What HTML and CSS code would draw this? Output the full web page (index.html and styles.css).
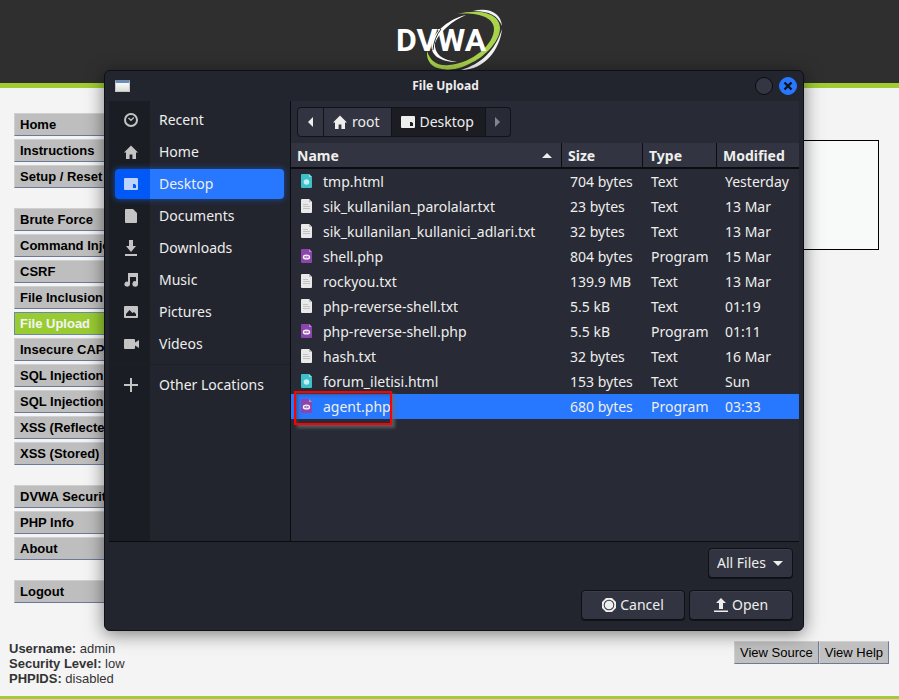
FILE: index.html
```html
<!DOCTYPE html>
<html lang="en">
<head>
<meta charset="utf-8">
<title>File Upload</title>
<link rel="stylesheet" href="styles.css">
</head>
<body>
<svg class="defs" aria-hidden="true">
  <symbol id="i-home" viewBox="0 0 14 14"><path d="M7 0.5 0 7.5h2V14h3.6V9.500h2.800V14H12V7.500h2z"/></symbol>
  <symbol id="i-desktop" viewBox="0 0 14 14"><path fill-rule="evenodd" d="M1 1h12q1 0 1 1v10q0 1-1 1H1q-1 0-1-1V2q0-1 1-1zM9 7v4h3V8.200L10.800 7z"/></symbol>
  <symbol id="i-txt" viewBox="0 0 11 14"><path fill="#e9e9e9" d="M1 0h7l3 3v10q0 1-1 1H1q-1 0-1-1V1q0-1 1-1z"/><path fill="#c3c3c3" d="M2 5h5v1H2zM2 7h7v1H2zM2 9h7v1H2z"/><path fill="#bbb" d="M8 0l3 3H8z"/></symbol>
  <symbol id="i-html" viewBox="0 0 11 14"><path fill="#3fbfc7" d="M1 0h7l3 3v10q0 1-1 1H1q-1 0-1-1V1q0-1 1-1z"/><path fill="#8ee0e4" d="M8 0l3 3H8z"/><circle cx="5.500" cy="8" r="2.800" fill="#bdf0f2"/></symbol>
  <symbol id="i-php" viewBox="0 0 11 14"><path fill="#8e44ad" d="M1 0h7l3 3v10q0 1-1 1H1q-1 0-1-1V1q0-1 1-1z"/><path fill="#bd8ad2" d="M8 0l3 3H8z"/><ellipse cx="5.500" cy="8" rx="3" ry="1.900" fill="none" stroke="#fff" stroke-width="1.400"/><path fill="#fff" d="M4.500 7.500h2v1h-2z"/></symbol>
</svg>

<header class="banner">
  <svg class="logo" width="106" height="62" viewBox="0 0 106 62" role="img" aria-label="DVWA">
    <path fill="#f4f4f4" d="M76 2C92-2 104 4 105 17 101 7 93 2 76 2z"/>
    <path fill="#f4f4f4" d="M105 20C103 40 88 61 64 61 84 55 98 42 105 20z"/>
    <path fill="#a9d34b" d="M60 5C84-1 103 5 103 19 103 34 84 50 74 54 60 62 48 61 45 60 35 59 29 52 30 42 34 54 42 57 52 56 76 54 97 35 97 20 97 8 80 3 60 5z"/>
    <path fill="#fff" d="M69 6C52 10 38 22 35 33 32 46 43 53 60 53 45 51 37 45 38 34 42 23 55 12 69 6z"/>
    <text class="logo-text" x="-1" y="42">DVWA</text>
    <path fill="none" stroke="#2f2f2f" d="M44 20Q37 29 36 41"/>
  </svg>
</header>

<div class="page">
  <nav class="menu">
    <ul>
      <li><a href="#">Home</a></li>
      <li><a href="#">Instructions</a></li>
      <li><a href="#">Setup / Reset DB</a></li>
    </ul>
    <ul>
      <li><a href="#">Brute Force</a></li>
      <li><a href="#">Command Injection</a></li>
      <li><a href="#">CSRF</a></li>
      <li><a href="#">File Inclusion</a></li>
      <li><a href="#" class="current">File Upload</a></li>
      <li><a href="#">Insecure CAPTCHA</a></li>
      <li><a href="#">SQL Injection</a></li>
      <li><a href="#">SQL Injection (Blind)</a></li>
      <li><a href="#">XSS (Reflected)</a></li>
      <li><a href="#">XSS (Stored)</a></li>
    </ul>
    <ul>
      <li><a href="#">DVWA Security</a></li>
      <li><a href="#">PHP Info</a></li>
      <li><a href="#">About</a></li>
    </ul>
    <ul>
      <li><a href="#">Logout</a></li>
    </ul>
  </nav>
  <main class="vulnerable"></main>
</div>

<div class="system">
  <div class="status"><b>Username:</b> admin<br><b>Security Level:</b> low<br><b>PHPIDS:</b> disabled</div>
  <div class="help"><button type="button">View Source</button><button type="button">View Help</button></div>
</div>

<section class="dialog" role="dialog" aria-labelledby="dialog-title">
  <div class="titlebar">
    <span class="window-icon"></span>
    <h1 id="dialog-title">File Upload</h1>
    <div class="controls">
      <button type="button" class="round" aria-label="Maximize"></button>
      <button type="button" class="round close" aria-label="Close"><svg width="10" height="10" viewBox="0 0 10 10"><path d="M1.500 1.500l7 7M8.500 1.500l-7 7" stroke="#10131b" stroke-width="2.400"/></svg></button>
    </div>
  </div>

  <div class="body">
    <nav class="places">
      <a href="#"><svg viewBox="0 0 14 14"><circle cx="7" cy="7" r="6" fill="none" stroke="currentColor" stroke-width="2"/><path d="M4.500 5 7 7.300 9.800 4.500" fill="none" stroke="currentColor" stroke-width="1.300"/></svg><span>Recent</span></a>
      <a href="#"><svg><use href="#i-home"/></svg><span>Home</span></a>
      <a href="#" class="active"><svg><use href="#i-desktop"/></svg><span>Desktop</span></a>
      <a href="#"><svg viewBox="0 0 14 14"><path d="M2 0h7l4 4v9q0 1-1 1H2q-1 0-1-1V1q0-1 1-1z"/></svg><span>Documents</span></a>
      <a href="#"><svg class="tall" viewBox="0 0 14 16"><path d="M5 0h4v6h3l-5 6-5-6h3zM1 14h12v2H1z"/></svg><span>Downloads</span></a>
      <a href="#"><svg viewBox="0 0 14 14"><path d="M4 0h10v11a2.800 2.800 0 1 1-2-2.800V4H6v7.500A2.800 2.500 0 1 1 4 8.700z"/></svg><span>Music</span></a>
      <a href="#"><svg viewBox="0 0 14 14"><path fill-rule="evenodd" d="M1 1h12q1 0 1 1v10q0 1-1 1H1q-1 0-1-1V2q0-1 1-1zM2 11h10V9l-2-2-1.500 1L5.500 5 2 9z"/></svg><span>Pictures</span></a>
      <a href="#"><svg class="wide" viewBox="0 0 16 14"><path d="M1 2h9q1 0 1 1v2.500L15 3v8l-4-2.500V11q0 1-1 1H1q-1 0-1-1V3q0-1 1-1z"/></svg><span>Videos</span></a>
      <hr>
      <a href="#"><svg viewBox="0 0 14 14"><path d="M6 0h2v6h6v2H8v6H6V8H0V6h6z"/></svg><span>Other Locations</span></a>
    </nav>

    <div class="browser">
      <div class="pathbar">
        <button type="button" class="step" aria-label="Back"><svg width="5" height="10" viewBox="0 0 5 10"><path d="M5 0v10L0 5z"/></svg></button>
        <button type="button" class="crumb"><svg width="14" height="14"><use href="#i-home"/></svg>root</button>
        <button type="button" class="crumb here"><svg width="14" height="14"><use href="#i-desktop"/></svg>Desktop</button>
        <button type="button" class="step" aria-label="Forward" disabled><svg width="5" height="10" viewBox="0 0 5 10"><path d="M0 0v10l5-5z"/></svg></button>
      </div>
      <table class="files">
        <colgroup><col class="c-name"><col class="c-size"><col class="c-type"><col></colgroup>
        <thead>
          <tr><th><div class="sorted">Name<i class="sort"></i></div></th><th>Size</th><th>Type</th><th>Modified</th></tr>
        </thead>
        <tbody>
          <tr><td><svg><use href="#i-html"/></svg>tmp.html</td><td>704 bytes</td><td>Text</td><td>Yesterday</td></tr>
          <tr><td><svg><use href="#i-txt"/></svg>sik_kullanilan_parolalar.txt</td><td>23 bytes</td><td>Text</td><td>13 Mar</td></tr>
          <tr><td><svg><use href="#i-txt"/></svg>sik_kullanilan_kullanici_adlari.txt</td><td>32 bytes</td><td>Text</td><td>13 Mar</td></tr>
          <tr><td><svg><use href="#i-php"/></svg>shell.php</td><td>804 bytes</td><td>Program</td><td>15 Mar</td></tr>
          <tr><td><svg><use href="#i-txt"/></svg>rockyou.txt</td><td>139.9 MB</td><td>Text</td><td>13 Mar</td></tr>
          <tr><td><svg><use href="#i-txt"/></svg>php-reverse-shell.txt</td><td>5.5 kB</td><td>Text</td><td>01:19</td></tr>
          <tr><td><svg><use href="#i-php"/></svg>php-reverse-shell.php</td><td>5.5 kB</td><td>Program</td><td>01:11</td></tr>
          <tr><td><svg><use href="#i-txt"/></svg>hash.txt</td><td>32 bytes</td><td>Text</td><td>16 Mar</td></tr>
          <tr><td><svg><use href="#i-html"/></svg>forum_iletisi.html</td><td>153 bytes</td><td>Text</td><td>Sun</td></tr>
          <tr class="selected"><td><svg><use href="#i-php"/></svg>agent.php<span class="marker"></span></td><td>680 bytes</td><td>Program</td><td>03:33</td></tr>
        </tbody>
      </table>
    </div>
  </div>

  <div class="actions">
    <div class="filter"><select aria-label="File type"><option>All Files</option></select></div>
    <div class="buttons">
      <button type="button"><svg width="14" height="14" viewBox="0 0 14 14"><path fill-rule="evenodd" d="M4 0h6l4 4v6l-4 4H4l-4-4V4zM7 1.700a5.300 5.300 0 1 0 0 10.600A5.300 5.300 0 1 0 7 1.700z"/><circle cx="7" cy="7" r="4.300"/></svg>Cancel</button>
      <button type="button"><svg width="14" height="14" viewBox="0 0 14 14"><path d="M5 11h4V5h3L7 0 2 5h3zM0 12.500h14V14H0z"/></svg>Open</button>
    </div>
  </div>
</section>
</body>
</html>
```
FILE: styles.css
```css
* { box-sizing: border-box; }

body {
  margin: 0;
  min-height: 100vh;
  display: flex;
  flex-direction: column;
  background: #f4f4f4;
  border-bottom: 3px solid #a1cc33;
  font: 13px/15px "Liberation Sans", Arial, sans-serif;
  color: #333;
}

a { color: inherit; text-decoration: none; }
button, select { font: inherit; color: inherit; margin: 0; }
.defs { position: absolute; width: 0; height: 0; }

/* Site */
.banner {
  display: flex;
  justify-content: center;
  height: 88px;
  padding-top: 9px;
  background: #2f2f2f;
  border-bottom: 5px solid #a1cc33;
}
.logo { overflow: visible; }
.logo-text { font: bold 32px Roboto, sans-serif; fill: #fff; }

.page { display: flex; gap: 40px; padding: 25px 20px 0 14px; }

.menu { width: 160px; flex: none; }
.menu ul {
  display: grid;
  gap: 3px;
  margin: 0 0 20px;
  padding: 0;
  list-style: none;
}
.menu a {
  display: block;
  height: 23px;
  padding: 3px 5px;
  border: 1px solid #d0d0d0;
  border-color: #d0d0d0 #6b7a99 #6b7a99 #d0d0d0;
  background: #bebebe;
  color: #000;
  font-weight: bold;
  white-space: nowrap;
}
.menu .current { background: #9c3; border-color: #7088a8; color: #f4f4f4; }

.vulnerable {
  flex: 1;
  height: 110px;
  margin-top: 27px;
  border: 1px solid #000;
  background: #f8faf9;
}

.system {
  display: flex;
  justify-content: space-between;
  align-items: flex-start;
  margin-top: auto;
  padding: 0 10px 10px 9px;
}
.help { display: flex; }
.help button {
  height: 23px;
  padding: 0 5px;
  border: 1px solid;
  border-color: #d0d0d0 #6b7a99 #6b7a99 #d0d0d0;
  background: #c0c0c0;
  color: #000;
}

/* File chooser */
.dialog {
  position: absolute;
  top: 70px;
  left: 104px;
  right: 95px;
  padding: 0 4px;
  border: 1px solid #0e1015;
  border-radius: 6px;
  background: #22252e;
  box-shadow: 0 3px 18px rgba(0, 0, 0, .5);
  color: #eeeeec;
  font: 14px/20px "Noto Sans", sans-serif;
}
.dialog svg { fill: currentColor; flex: none; }

.titlebar {
  display: flex;
  align-items: center;
  height: 30px;
  padding: 0 2px 0 6px;
}
.titlebar h1 { flex: 1; margin: 0 0 0 6px; font-size: 12px; font-weight: bold; text-align: center; }
.window-icon {
  width: 15px;
  height: 12px;
  background: linear-gradient(#fafafa, #dcded8);
  border: 1px solid #c5c8c2;
  border-top: 3px solid #6d8db5;
}
.controls { display: flex; gap: 6px; }
.round {
  display: grid;
  place-items: center;
  width: 18px;
  height: 18px;
  padding: 0;
  border: 1px solid #0b0c10;
  border-radius: 50%;
  background: #343743;
}
.close { background: #2777ff; border-color: #2777ff; }

.body { display: flex; height: 441px; border-bottom: 1px solid #0b0c10; }

.places {
  flex: none;
  width: 182px;
  padding: 4px 6px 0;
  border-right: 1px solid #0b0c10;
  background: linear-gradient(to right, #1a1d24 41px, #22252e 41px);
}
.places a {
  display: flex;
  align-items: center;
  height: 30px;
  margin: 0 0 2px;
  padding-left: 9px;
  border-radius: 4px;
}
.places svg { width: 14px; height: 14px; color: #c4c4c5; }
.places .tall { height: 16px; }
.places .wide { width: 16px; }
.places span { margin-left: 21px; }
.places .wide + span { margin-left: 19px; }
.places .active {
  background: linear-gradient(to right, #0059f7 35px, #2777ff 35px);
  box-shadow: 0 0 6px #1d4fae;
}
.places .active svg { color: #bcd4ff; }
.places hr { height: 1px; margin: 5px -6px; border: 0; background: #1c1f27; }

.browser { flex: 1; min-width: 0; background: #282a35; }

.pathbar { display: flex; padding: 6px; }
.pathbar button {
  display: flex;
  align-items: center;
  gap: 5px;
  height: 30px;
  padding: 0 11px 0 9px;
  border: 1px solid #111319;
  border-left-width: 0;
  background: #323541;
}
.pathbar button:first-child { border-left-width: 1px; border-radius: 4px 0 0 4px; }
.pathbar button:last-child { border-radius: 0 4px 4px 0; }
.pathbar .step { justify-content: center; width: 25px; padding: 0; }
.pathbar .step:first-child { width: 27px; }
.pathbar .here { background: #1b1d23; }
.pathbar .step:disabled { background: #282a35; color: #85868c; }

.files { width: 100%; table-layout: fixed; border-collapse: separate; border-spacing: 0; }
.c-name { width: 271px; }
.c-size { width: 81px; }
.c-type { width: 74px; }
.files th {
  height: 26px;
  padding: 1px 6px 0;
  border: solid #0b0c10;
  border-width: 0 1px 2px 0;
  background: #323541;
  text-align: left;
}
.files th:last-child { border-right: 0; }
.sorted { display: flex; align-items: center; justify-content: space-between; }
.sort {
  margin-right: 3px;
  border: 5px solid transparent;
  border-top: 0;
  border-bottom-color: #eeeeec;
}
.files td { height: 25px; padding: 0 0 0 8px; white-space: nowrap; }
.files td:first-child { position: relative; padding-left: 10px; }
.files td svg { width: 11px; height: 14px; margin-right: 11px; vertical-align: -1px; }
.selected { background: #2777ff; }
.marker {
  position: absolute;
  top: -3px;
  left: 3px;
  width: 98px;
  height: 34px;
  border: 2px solid #f00;
  box-shadow: 3px 3px 3px rgba(110, 110, 110, .7), inset 2px 2px 3px rgba(70, 70, 90, .6);
}

.actions { display: grid; justify-items: end; gap: 12px; padding: 6px 6px 10px; }
.buttons { display: flex; gap: 4px; }
.buttons button, .filter select {
  height: 30px;
  border: 1px solid #0e1015;
  border-radius: 4px;
  background: #323541;
  box-shadow: inset 0 1px #3b3e4a, 0 1px #111319;
}
.buttons button {
  display: flex;
  align-items: center;
  justify-content: center;
  gap: 4px;
  width: 104px;
}
.filter { position: relative; }
.filter select { appearance: none; width: 85px; padding: 0 8px; }
.filter::after {
  content: "";
  position: absolute;
  top: 13px;
  right: 10px;
  border: 5px solid transparent;
  border-bottom: 0;
  border-top-color: #eeeeec;
  pointer-events: none;
}
```
